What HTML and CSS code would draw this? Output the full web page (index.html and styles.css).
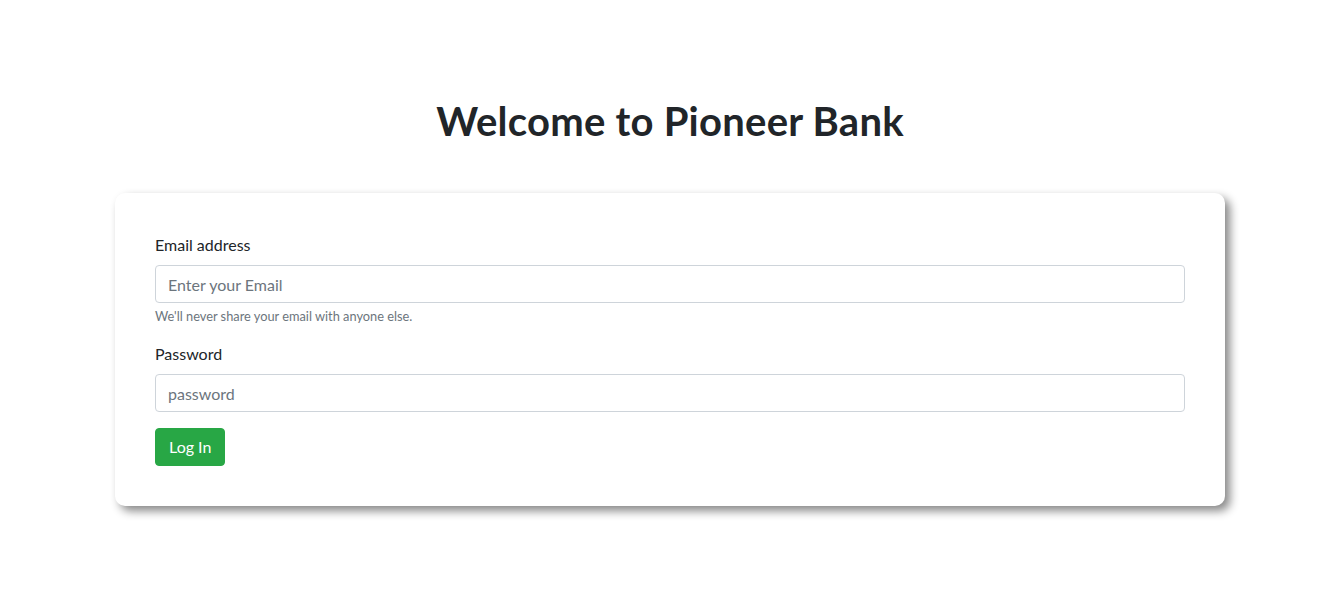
FILE: index.html
```html
<!DOCTYPE html>
<html lang="en">
<head>
<meta charset="utf-8">
<title>Pioneer Bank</title>
<link rel="stylesheet" href="styles.css">
</head>
<body>
<div class="container">
  <h1 class="title">Welcome to Pioneer Bank</h1>
  <div class="card">
    <form class="login-form">
      <div class="form-group">
        <label class="form-label" for="email">Email address</label>
        <input class="form-control" type="email" id="email" placeholder="Enter your Email">
        <small class="form-text">We'll never share your email with anyone else.</small>
      </div>
      <div class="form-group">
        <label class="form-label" for="password">Password</label>
        <input class="form-control" type="password" id="password" placeholder="password">
      </div>
      <button class="btn btn-success" type="submit">Log In</button>
    </form>
  </div>
</div>
</body>
</html>
```
FILE: styles.css
```css
* { box-sizing: border-box; }

html, body {
  min-height: 100%;
}

body {
  margin: 0;
  padding-left: 11px;
  background: #fff;
  color: #212529;
  font-family: Lato, "Open Sans", sans-serif;
  font-size: 16px;
  line-height: 1.5;
}

.container {
  width: 1140px;
  margin: 0 auto;
  padding: 97px 15px 60px;
}

.title {
  margin: 0 0 48px;
  text-align: center;
  font-size: 40px;
  font-weight: 700;
  line-height: 48px;
  letter-spacing: 0.25px;
}

.card {
  background: #fff;
  border-radius: 10px;
  padding: 40px;
  box-shadow: 5px 5px 10px #888;
}

.login-form {
  display: flex;
  flex-direction: column;
  align-items: flex-start;
}

.form-group {
  width: 100%;
  display: flex;
  flex-direction: column;
  margin-bottom: 16px;
}

.form-label {
  margin-bottom: 8px;
  line-height: 24px;
}

.form-control {
  width: 100%;
  height: 38px;
  padding: 6px 12px;
  border: 1px solid #ced4da;
  border-radius: 4px;
  font: inherit;
  font-size: 16px;
  color: #495057;
  background: #fff;
}

.form-control::placeholder {
  color: #6c757d;
  opacity: 1;
}

.form-text {
  margin-top: 4px;
  font-size: 12.8px;
  line-height: 19.2px;
  color: #6c757d;
}

.btn {
  height: 38px;
  padding: 6px 13px;
  border: 1px solid transparent;
  border-radius: 4px;
  font: inherit;
  font-size: 16px;
  line-height: 24px;
  cursor: pointer;
}

.btn-success {
  background: #28a745;
  border-color: #28a745;
  color: #fff;
}
```
